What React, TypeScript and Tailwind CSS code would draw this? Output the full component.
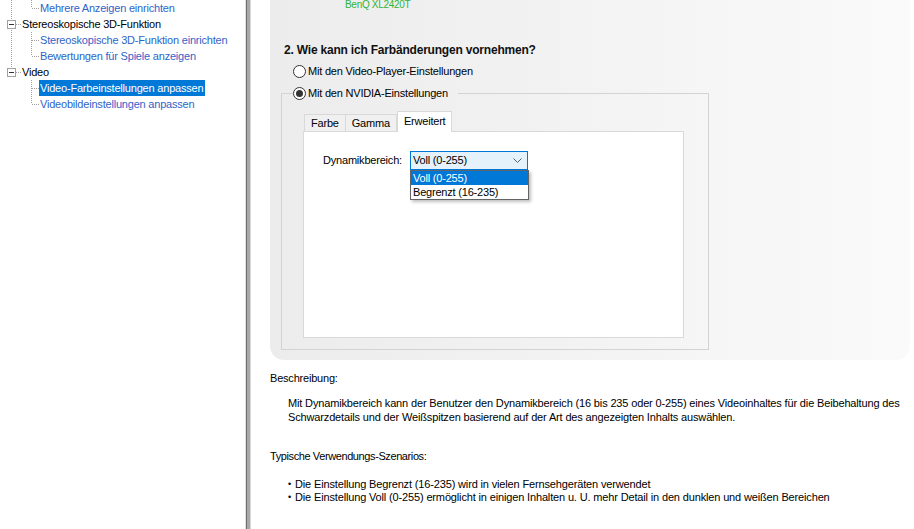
import React from "react";

type Line = "full" | "top" | "none";

function Guides({ w, v1, box, v2, h2 }: { w: number; v1: Line; box?: boolean; v2?: Line; h2?: boolean }) {
  const dash = { stroke: "#a0a0a0", strokeWidth: 1, strokeDasharray: "1 1" };
  return (
    <svg width={w} height={16} className="shrink-0">
      {v1 !== "none" && <line x1={11.5} y1={0} x2={11.5} y2={v1 === "full" ? 16 : 8} {...dash} />}
      {v2 && v2 !== "none" && <line x1={31.5} y1={0} x2={31.5} y2={v2 === "full" ? 16 : 8} {...dash} />}
      {h2 && <line x1={32} y1={8.5} x2={39} y2={8.5} {...dash} />}
      {box && (
        <>
          <line x1={16} y1={8.5} x2={21} y2={8.5} {...dash} />
          <rect x={7.5} y={4.5} width={8} height={8} fill="#fff" stroke="#a0a0a0" />
          <line x1={9} y1={8.5} x2={14} y2={8.5} stroke="#333" />
        </>
      )}
    </svg>
  );
}

function Parent({ label, last }: { label: string; last?: boolean }) {
  return (
    <div className="flex h-4 items-center">
      <Guides w={21} v1={last ? "top" : "full"} box />
      <span className="pl-[1px] text-black">{label}</span>
    </div>
  );
}

function Child({ label, v1, last, selected }: { label: string; v1: Line; last?: boolean; selected?: boolean }) {
  return (
    <div className="flex h-4 items-center">
      <Guides w={39} v1={v1} v2={last ? "top" : "full"} h2 />
      <span
        className={
          selected
            ? "h-4 bg-[#0078d7] pl-[1px] pr-[2px] leading-4 text-white"
            : "pl-[1px] leading-4 text-[#2f64c8]"
        }
      >
        {label}
      </span>
    </div>
  );
}

function Radio({ checked, label }: { checked?: boolean; label: string }) {
  return (
    <div className="flex h-[14px] items-center">
      <span className="flex h-[13px] w-[13px] items-center justify-center rounded-full border border-[#333] bg-white">
        {checked && <span className="h-[7px] w-[7px] rounded-full bg-[#333]" />}
      </span>
      <span className="ml-[2px] leading-[14px]">{label}</span>
    </div>
  );
}

export default function App() {
  return (
    <div className="flex h-[529px] w-[914px] overflow-hidden bg-white font-['Liberation_Sans',Arial,sans-serif] text-[11px] tracking-[-0.2px] text-black">
      <div className="w-[245px] shrink-0">
        <Child label="Mehrere Anzeigen einrichten" v1="full" last />
        <Parent label="Stereoskopische 3D-Funktion" />
        <Child label="Stereoskopische 3D-Funktion einrichten" v1="full" />
        <Child label="Bewertungen für Spiele anzeigen" v1="full" last />
        <Parent label="Video" last />
        <Child label="Video-Farbeinstellungen anpassen" v1="none" selected />
        <Child label="Videobildeinstellungen anpassen" v1="none" last />
      </div>

      <div className="flex w-[6px] shrink-0">
        <div className="w-px bg-[#e0e0e0]" />
        <div className="w-px bg-[#6e6e6e]" />
        <div className="w-[3px] bg-[#a8a8a8]" />
        <div className="w-px bg-[#d8d8d8]" />
      </div>

      <div className="flex flex-1 flex-col pl-[19px] pr-[4px]">
        <div className="h-[360px] shrink-0 rounded-b-[14px] bg-linear-to-r from-[#ececec] to-[#fafafa]">
          <div className="-mt-[2px] ml-[75px] text-[10px] leading-[14px] tracking-[-0.3px] text-[#2fb43a]">BenQ XL2420T</div>
          <div className="ml-[14px] mt-[31px] text-[12px] font-bold leading-[14px] text-[#111]">
            2. Wie kann ich Farbänderungen vornehmen?
          </div>
          <div className="ml-[23px] mt-[7px]">
            <Radio label="Mit den Video-Player-Einstellungen" />
          </div>
          <fieldset className="ml-[11px] mt-[8px] h-[264px] w-[428px] border border-[#d3d3d3] px-0 pb-0">
            <legend className="ml-[11px] pr-[10px]">
              <Radio checked label="Mit den NVIDIA-Einstellungen" />
            </legend>
            <div className="ml-[21px] mt-[11px]">
              <div className="flex items-end pl-px">
                <div className="flex h-[17px] items-center border border-b-0 border-[#d9d9d9] bg-[#f0f0f0] px-[6px]">Farbe</div>
                <div className="flex h-[17px] items-center border border-b-0 border-l-0 border-[#d9d9d9] bg-[#f0f0f0] px-[6px]">Gamma</div>
                <div className="relative z-10 -mb-px flex h-[21px] items-start border border-b-0 border-[#d9d9d9] bg-white px-[6px] pt-[1px]">
                  Erweitert
                </div>
              </div>
              <div className="h-[207px] w-[381px] border border-[#d9d9d9] bg-white pl-[19px] pt-[19px]">
                <div className="flex items-center">
                  <span className="w-[87px]">Dynamikbereich:</span>
                  <div className="relative">
                    <div className="flex h-[19px] w-[118px] items-center justify-between border border-[#0078d7] bg-[#e5f1fb] pl-[2px] pr-[5px]">
                      <span>Voll (0-255)</span>
                      <svg width="9" height="5" viewBox="0 0 9 5">
                        <path d="M0.5 0.5 L4.5 4.5 L8.5 0.5" fill="none" stroke="#606060" />
                      </svg>
                    </div>
                    <div className="absolute left-0 top-full z-20 w-[119px] border border-[#646464] bg-white shadow-[2px_2px_3px_rgba(0,0,0,0.25)]">
                      <div className="h-[14px] bg-[#0078d7] pl-[2px] leading-[14px] text-white">Voll (0-255)</div>
                      <div className="h-[14px] pl-[2px] leading-[14px]">Begrenzt (16-235)</div>
                    </div>
                  </div>
                </div>
              </div>
            </div>
          </fieldset>
        </div>

        <div className="mt-[11px] leading-[14px]">Beschreibung:</div>
        <div className="ml-[18px] mt-[11px] leading-[14px] tracking-[-0.15px]">
          Mit Dynamikbereich kann der Benutzer den Dynamikbereich (16 bis 235 oder 0-255) eines Videoinhaltes für die Beibehaltung des
          <br />
          Schwarzdetails und der Weißspitzen basierend auf der Art des angezeigten Inhalts auswählen.
        </div>
        <div className="mt-[25px] leading-[14px] tracking-[-0.4px]">Typische Verwendungs-Szenarios:</div>
        <div className="ml-[18px] mt-[15px] leading-[13px] tracking-[-0.15px]">
          <div className="flex">
            <span className="w-[7px] text-[9px]">•</span>
            <span>Die Einstellung Begrenzt (16-235) wird in vielen Fernsehgeräten verwendet</span>
          </div>
          <div className="flex">
            <span className="w-[7px] text-[9px]">•</span>
            <span>Die Einstellung Voll (0-255) ermöglicht in einigen Inhalten u. U. mehr Detail in den dunklen und weißen Bereichen</span>
          </div>
        </div>
      </div>
    </div>
  );
}
